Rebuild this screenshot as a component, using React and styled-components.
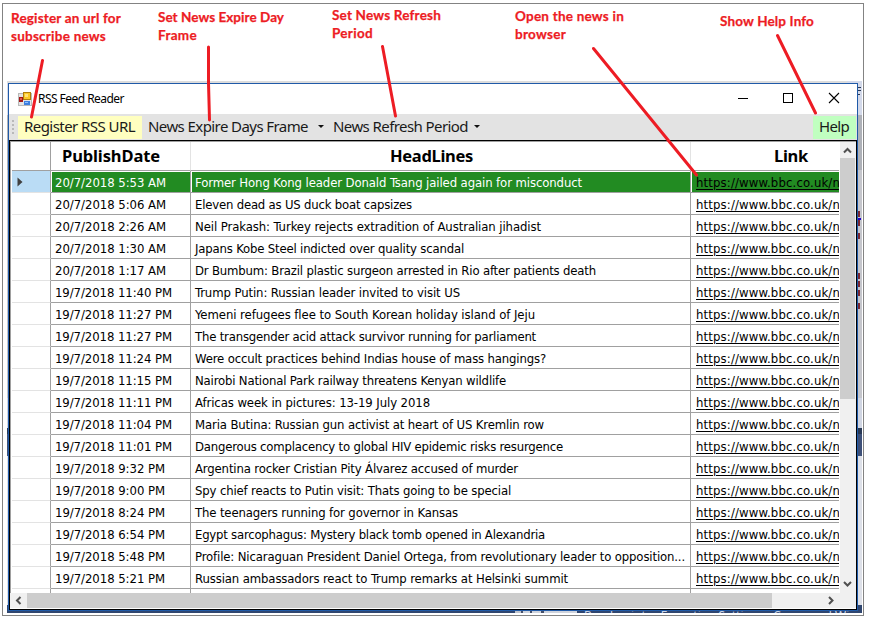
import React, { useLayoutEffect, useRef, useState } from "react";
import styled, { createGlobalStyle } from "styled-components";

const Global = createGlobalStyle`
  *{box-sizing:border-box}
  body{margin:0;background:#fff;width:869px;height:617px;overflow:hidden}
`;
const ui = `"DejaVu Sans Condensed","DejaVu Sans",sans-serif`;

const Frame = styled.main`
  position:relative;width:862px;height:613px;margin:3px 0 0 2px;border:1px solid #838383;
  padding:77px 1px 2px 4px;background:#fff;overflow:hidden;
`;
const Backdrop = styled.div`
  height:532px;padding:2px 4px 0 1px;display:flex;flex-direction:column;overflow:hidden;
  background:
    linear-gradient(#7a2836,#7a2836) 851px 130px/2px 6px no-repeat,
    linear-gradient(#2200cc,#2200cc) 851px 137px/3px 2px no-repeat,
    linear-gradient(#7a2836,#7a2836) 851px 139px/2px 6px no-repeat,
    linear-gradient(#7a2836,#7a2836) 851px 152px/2px 6px no-repeat,
    linear-gradient(#7a2836,#7a2836) 851px 192px/2px 6px no-repeat,
    linear-gradient(#7a2836,#7a2836) 851px 200px/2px 6px no-repeat,
    linear-gradient(#7a2836,#7a2836) 851px 209px/2px 6px no-repeat,
    linear-gradient(#7a2836,#7a2836) 851px 222px/2px 6px no-repeat,
    linear-gradient(#293955,#293955) 851px 6px/3px 1px no-repeat,
    linear-gradient(#293955,#293955) 851px 9px/3px 1px no-repeat,
    linear-gradient(#293955,#293955) 851px 13px/2px 1px no-repeat,
    linear-gradient(90deg,#bfc3cc 0 6px,#46506a 6px 8px,#cfd3dc 8px 15px,#46506a 15px 17px,#cfd3dc 17px 26px,#46506a 26px 29px,#cfd3dc 29px 62px) 508px 530px/62px 2px no-repeat,
    linear-gradient(#dcdcdc,#dcdcdc) 0 0/840px 2px no-repeat,
    linear-gradient(#d3d9ea 0 34px,#aeb1b8 34px 89px,#c5c6cc 89px 317px,#d0d5e2 317px 347px,#293955 347px 353px,#3e5078 353px 375px,#dde0e8 375px 524px,#30466f 524px);
`;
const Window = styled.section`
  width:850px;height:528px;border:1px solid #1f5aa8;background:#fff;display:flex;flex-direction:column;flex:none;
`;
const TitleBar = styled.header`
  height:30px;display:flex;align-items:center;padding:0 17px 0 9px;
`;
const Title = styled.h1`
  margin:-2px auto 0 5px;font:12px "Noto Sans",sans-serif;color:#000;height:17px;line-height:17px;
`;
const Controls = styled.div`display:flex;gap:34px;height:12px;margin-top:-2px;`;
const ToolBar = styled.nav`
  height:26px;background:#e3e3e3;display:flex;align-items:center;color:#111;flex:none;
  padding:0 1px 0 9px;
`;
const Grip = styled.div`
  width:2px;height:14px;margin:0 4px 0 -6px;
  background:repeating-linear-gradient(#b9b9b9 0 2px,transparent 2px 4px);
`;
const ToolItem = styled.button`
  border:0;height:23px;padding:0 0 2px;margin:0;font:15px/21px "Noto Sans",sans-serif;color:#1a1a1a;
  background:${p => p.$bg || "transparent"};width:${p => p.$w}px;padding-left:${p => p.$pad || 0}px;
  display:flex;align-items:center;justify-content:flex-start;
`;
const Caret = styled.i`
  width:0;height:0;border:3px solid transparent;border-top-color:#111;border-bottom:0;margin-left:${p => p.$gap}px;
`;
const Spacer = styled.div`flex:1`;
const GridFrame = styled.div`
  flex:1;border:1px solid #000;display:flex;flex-direction:column;min-height:0;
`;
const Upper = styled.div`
  height:452px;display:flex;border-top:1px solid #a0a0a0;border-left:1px solid #a0a0a0;padding-left:1px;
`;
const Viewport = styled.div`width:827px;margin-right:1px;overflow:hidden;`;
const Row = styled.div`
  display:grid;grid-template-columns:39px 140px 500px 149px;height:${p => p.$head ? 29 : 22}px;
`;
const HeadCell = styled.div`
  border-right:1px solid ${p => p.$strong ? "#a0a0a0" : "#e3e3e3"};border-bottom:1px solid #a0a0a0;
  font:bold 16.5px/28px "Noto Sans",sans-serif;color:#000;padding-left:${p => p.$pad || 0}px;
  &:last-child{border-right:0}
`;
const RowHead = styled.div`
  border-right:1px solid #a0a0a0;border-bottom:1px solid #e3e3e3;display:flex;align-items:center;padding-left:5px;
  background:${p => p.$on ? "#badcf5" : "#fff"};
`;
const Cell = styled.div`
  border-right:1px solid #a0a0a0;border-bottom:1px solid #a0a0a0;padding:1px 0 0 1px;
  &:last-child{border-right:0}
`;
const CellFill = styled.div`
  height:20px;background:${p => p.$on ? "#228b22" : "transparent"};color:${p => p.$on && !p.$link ? "#fff" : "#000"};
  font:13px/22px ${ui};padding-left:${p => p.$link ? 4 : 3}px;white-space:nowrap;overflow:hidden;
  text-decoration:${p => p.$link ? "underline" : "none"};text-underline-offset:2px;text-decoration-thickness:1px;
`;
const Track = styled.div`
  display:flex;flex-direction:${p => p.$vertical ? "column" : "row"};background:#f0f0f0;
  width:${p => p.$vertical ? "16px" : "846px"};height:${p => p.$vertical ? "451px" : "15px"};flex:none;
  padding-bottom:${p => p.$vertical ? "2px" : "0"};
`;
const Thumb = styled.div`
  background:#cdcdcd;width:${p => p.$w}px;height:${p => p.$h}px;
`;
const ArrowBox = styled.div`
  width:${p => p.$w || 15}px;height:${p => p.$h || 16}px;display:flex;align-items:center;justify-content:center;
`;
const Overlay = styled.svg`position:absolute;left:-3px;top:-4px;pointer-events:none;`;
const Note = styled.p`
  position:absolute;left:${p => p.$x - 3}px;top:${p => p.$y - 4}px;margin:0;
  font:bold 13.5px/18px Lato,"Open Sans",sans-serif;color:#ed1c24;white-space:nowrap;
  -webkit-text-stroke:.25px #ed1c24;
`;
const Bleed = styled.div`
  height:2px;overflow:hidden;color:#ccd5e8;font:12px/10px "Noto Sans",sans-serif;padding-left:576px;white-space:pre;
`;
const Fitted = styled.span`display:inline-block;white-space:pre;text-decoration:inherit;`;

function Fit({ w, children }) {
  const ref = useRef(null);
  const [spacing, setSpacing] = useState(0);
  useLayoutEffect(() => {
    const natural = ref.current.getBoundingClientRect().width;
    setSpacing((w - natural) / children.length);
  }, [w, children]);
  return <Fitted ref={ref} style={{ letterSpacing: `${spacing}px` }}>{children}</Fitted>;
}

const paths = {
  up: "M1 6.5L4.5 3L8 6.5", down: "M1 3L4.5 6.5L8 3", left: "M6.5 1L3 4.5L6.5 8", right: "M3 1L6.5 4.5L3 8",
};
const Chevron = ({ dir }) => (
  <svg width="9" height="9"><path d={paths[dir]} fill="none" stroke="#505050" strokeWidth="2" /></svg>
);

const rows = [
  ["20/7/2018 5:53 AM", 111, "Former Hong Kong leader Donald Tsang jailed again for misconduct", 387],
  ["20/7/2018 5:06 AM", 111, "Eleven dead as US duck boat capsizes", 217],
  ["20/7/2018 2:26 AM", 111, "Neil Prakash: Turkey rejects extradition of Australian jihadist", 346],
  ["20/7/2018 1:30 AM", 111, "Japans Kobe Steel indicted over quality scandal", 269],
  ["20/7/2018 1:17 AM", 111, "Dr Bumbum: Brazil plastic surgeon arrested in Rio after patients death", 401],
  ["19/7/2018 11:40 PM", 117, "Trump Putin: Russian leader invited to visit US", 265],
  ["19/7/2018 11:27 PM", 117, "Yemeni refugees flee to South Korean holiday island of Jeju", 340],
  ["19/7/2018 11:27 PM", 117, "The transgender acid attack survivor running for parliament", 341],
  ["19/7/2018 11:24 PM", 117, "Were occult practices behind Indias house of mass hangings?", 351],
  ["19/7/2018 11:15 PM", 117, "Nairobi National Park railway threatens Kenyan wildlife", 311],
  ["19/7/2018 11:11 PM", 117, "Africas week in pictures: 13-19 July 2018", 235],
  ["19/7/2018 11:04 PM", 117, "Maria Butina: Russian gun activist at heart of US Kremlin row", 349],
  ["19/7/2018 11:01 PM", 117, "Dangerous complacency to global HIV epidemic risks resurgence", 368],
  ["19/7/2018 9:32 PM", 110, "Argentina rocker Cristian Pity Álvarez accused of murder", 323],
  ["19/7/2018 9:00 PM", 110, "Spy chief reacts to Putin visit: Thats going to be special", 316],
  ["19/7/2018 8:24 PM", 110, "The teenagers running for governor in Kansas", 263],
  ["19/7/2018 6:54 PM", 110, "Egypt sarcophagus: Mystery black tomb opened in Alexandria", 350],
  ["19/7/2018 5:48 PM", 110, "Profile: Nicaraguan President Daniel Ortega, from revolutionary leader to opposition...", 490],
  ["19/7/2018 5:21 PM", 110, "Russian ambassadors react to Trump remarks at Helsinki summit", 373],
];

function AppIcon() {
  return (
    <svg width="15" height="15" shapeRendering="crispEdges">
      <rect x=".5" y="1.5" width="13" height="12" fill="#e4e4e4" stroke="#b9b9b9" />
      <rect x="1" y="5" width="4" height="5" fill="#a51616" /><rect x="2" y="6" width="2" height="2" fill="#e05a4a" />
      <rect x="5.5" y=".5" width="7" height="7" fill="#fbc926" stroke="#b07d0c" /><rect x="7" y="2" width="3" height="3" fill="#ffe27a" />
      <rect x="6" y="9" width="6" height="4" fill="#3d7fe0" /><rect x="7" y="10" width="3" height="1" fill="#8fc0ff" />
    </svg>
  );
}

export default function App() {
  return (
    <>
      <Global />
      <Frame>
        <Backdrop>
          <Window>
            <TitleBar>
              <AppIcon />
              <Title><Fit w={86}>RSS Feed Reader</Fit></Title>
              <Controls>
                <svg width="11" height="12"><path d="M0 6.5H10" stroke="#000" /></svg>
                <svg width="11" height="12"><rect x=".5" y="1.5" width="9" height="9" fill="none" stroke="#000" /></svg>
                <svg width="12" height="12"><path d="M1 1L11 11M11 1L1 11" stroke="#000" strokeWidth="1.1" /></svg>
              </Controls>
            </TitleBar>
            <ToolBar>
              <Grip />
              <ToolItem $bg="#ffffc0" $w={124} $pad={6}><Fit w={111}>Register RSS URL</Fit></ToolItem>
              <ToolItem $w={185} $pad={6}><Fit w={160}>News Expire Days Frame</Fit><Caret $gap={10} /></ToolItem>
              <ToolItem $w={160} $pad={6}><Fit w={135}>News Refresh Period</Fit><Caret $gap={6} /></ToolItem>
              <Spacer />
              <ToolItem $bg="#c0ffc0" $w={43} $pad={6}><Fit w={30}>Help</Fit></ToolItem>
            </ToolBar>
            <GridFrame>
              <Upper>
                <Viewport>
                  <Row $head>
                    <HeadCell $strong />
                    <HeadCell $pad={11}><Fit w={98}>PublishDate</Fit></HeadCell>
                    <HeadCell $pad={199}><Fit w={83}>HeadLines</Fit></HeadCell>
                    <HeadCell $pad={83}><Fit w={34}>Link</Fit></HeadCell>
                  </Row>
                  {rows.map(([date, dw, headline, hw], i) => (
                    <Row key={i}>
                      <RowHead $on={i === 0}>
                        {i === 0 && <svg width="6" height="10"><path d="M.5 .5L5.5 5L.5 9.5Z" fill="#404040" /></svg>}
                      </RowHead>
                      <Cell><CellFill $on={i === 0}><Fit w={dw}>{date}</Fit></CellFill></Cell>
                      <Cell><CellFill $on={i === 0}><Fit w={hw}>{headline}</Fit></CellFill></Cell>
                      <Cell><CellFill $link $on={i === 0}><Fit w={144}>https://www.bbc.co.uk/n</Fit></CellFill></Cell>
                    </Row>
                  ))}
                  <Row><RowHead /><Cell /><Cell /><Cell /></Row>
                </Viewport>
                <Track $vertical>
                  <ArrowBox><Chevron dir="up" /></ArrowBox>
                  <Thumb $w={15} $h={241} />
                  <Spacer />
                  <ArrowBox><Chevron dir="down" /></ArrowBox>
                </Track>
              </Upper>
              <Track>
                <ArrowBox $w={17} $h={15}><Chevron dir="left" /></ArrowBox>
                <Thumb $w={745} $h={15} />
                <Spacer />
                <ArrowBox $w={17} $h={15}><Chevron dir="right" /></ArrowBox>
                <ArrowBox $w={17} $h={15} />
              </Track>
            </GridFrame>
          </Window>
          <Bleed><Fit w={280}>Breakpoints   Exception Settings   Command Wind</Fit></Bleed>
        </Backdrop>
        <Note $x={11} $y={9}><Fit w={110}>Register an url for</Fit><br /><Fit w={95}>subscribe news</Fit></Note>
        <Note $x={158} $y={8}><Fit w={126}>Set News Expire Day</Fit><br /><Fit w={39}>Frame</Fit></Note>
        <Note $x={332} $y={6}><Fit w={109}>Set News Refresh</Fit><br /><Fit w={41}>Period</Fit></Note>
        <Note $x={515} $y={7}><Fit w={109}>Open the news in</Fit><br /><Fit w={51}>browser</Fit></Note>
        <Note $x={720} $y={12}><Fit w={94}>Show Help Info</Fit></Note>
        <Overlay width="869" height="617" stroke="#ed1c24" strokeWidth="3" strokeLinecap="round">
          <path d="M42.5 60.5L31.5 117M208.5 47V83L209.5 120M382.5 46.5L395.5 116M593.5 48.5L696.5 175M777.5 35.5L815.5 113" fill="none" />
        </Overlay>
      </Frame>
    </>
  );
}
